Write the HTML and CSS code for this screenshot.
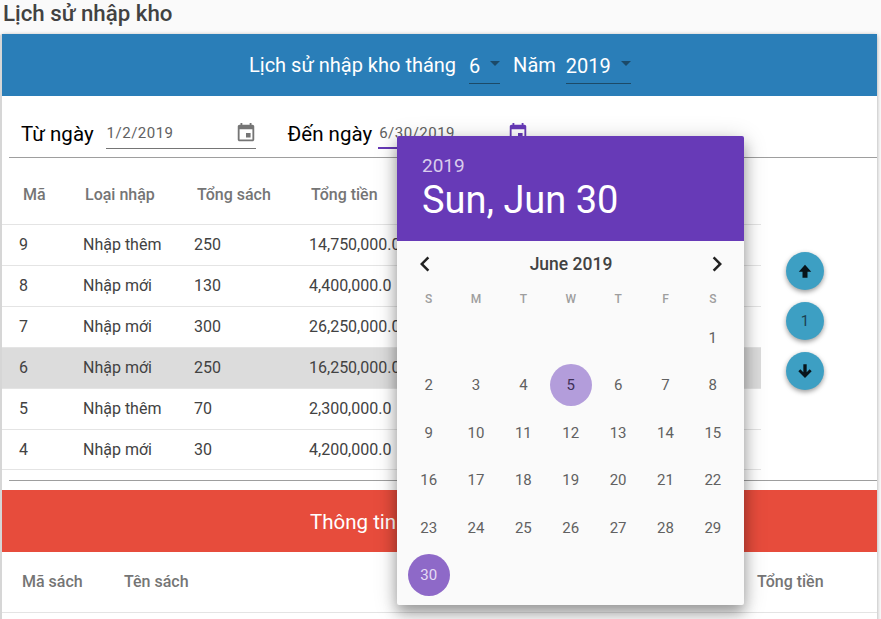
FILE: index.html
```html
<!DOCTYPE html>
<html lang="en">
<head>
    <meta charset="UTF-8">
    <meta name="viewport" content="width=device-width, initial-scale=1.0">
    <title>Lịch sử nhập kho</title>
    <link rel="stylesheet" href="styles.css">
</head>
<body>
    <h1 class="page-title">Lịch sử nhập kho</h1>

    <div class="card">
        <div class="banner banner-blue">
            <span>Lịch sử nhập kho tháng</span>
            <span class="select select-month">6<i class="caret"></i></span>
            <span>Năm</span>
            <span class="select select-year">2019<i class="caret"></i></span>
        </div>

        <div class="date-row">
            <span class="date-label">Từ ngày</span>
            <div class="date-input">
                <span>1/2/2019</span>
                <svg class="date-icon" viewBox="0 0 24 24"><path d="M17 12h-5v5h5v-5zM16 1v2H8V1H6v2H5c-1.11 0-1.99.9-1.99 2L3 19c0 1.1.89 2 2 2h14c1.1 0 2-.9 2-2V5c0-1.1-.9-2-2-2h-1V1h-2zm3 18H5V8h14v11z"/></svg>
            </div>
            <span class="date-label date-label-to">Đến ngày</span>
            <div class="date-input date-input-active">
                <span>6/30/2019</span>
                <svg class="date-icon" viewBox="0 0 24 24"><path d="M17 12h-5v5h5v-5zM16 1v2H8V1H6v2H5c-1.11 0-1.99.9-1.99 2L3 19c0 1.1.89 2 2 2h14c1.1 0 2-.9 2-2V5c0-1.1-.9-2-2-2h-1V1h-2zm3 18H5V8h14v11z"/></svg>
            </div>
        </div>
        <hr class="line">

        <div class="history">
            <table class="history-table">
                <thead>
                    <tr>
                        <th class="col-id">Mã</th>
                        <th class="col-type">Loại nhập</th>
                        <th class="col-books">Tổng sách</th>
                        <th>Tổng tiền</th>
                    </tr>
                </thead>
                <tbody>
                    <tr><td>9</td><td>Nhập thêm</td><td>250</td><td>14,750,000.0</td></tr>
                    <tr><td>8</td><td>Nhập mới</td><td>130</td><td>4,400,000.0</td></tr>
                    <tr><td>7</td><td>Nhập mới</td><td>300</td><td>26,250,000.0</td></tr>
                    <tr class="row-active"><td>6</td><td>Nhập mới</td><td>250</td><td>16,250,000.0</td></tr>
                    <tr><td>5</td><td>Nhập thêm</td><td>70</td><td>2,300,000.0</td></tr>
                    <tr class="row-last"><td>4</td><td>Nhập mới</td><td>30</td><td>4,200,000.0</td></tr>
                </tbody>
            </table>
            <div class="pager">
                <button class="fab"><svg viewBox="0 0 24 24"><path d="M12 4.500 19.500 13H15v7H9v-7H4.500z"/></svg></button>
                <button class="fab">1</button>
                <button class="fab"><svg viewBox="0 0 24 24"><path d="M10 4h4v9.500l3.600-3.600 2.400 2.400-8 8-8-8 2.400-2.400L10 13.500z"/></svg></button>
            </div>
        </div>
        <hr class="line line-bottom">

        <div class="banner banner-red">Thông tin</div>

        <div class="detail-head">
            <span class="col-code">Mã sách</span>
            <span class="col-name">Tên sách</span>
            <span>Tổng tiền</span>
        </div>
    </div>

    <div class="picker">
        <div class="picker-head">
            <div class="picker-year">2019</div>
            <div class="picker-date">Sun, Jun 30</div>
        </div>
        <div class="picker-body">
            <div class="picker-nav">
                <svg viewBox="0 0 24 24"><path d="M15.410 7.410 14 6l-6 6 6 6 1.410-1.410L10.830 12z"/></svg>
                <strong>June 2019</strong>
                <svg viewBox="0 0 24 24"><path d="M8.590 16.590 10 18l6-6-6-6-1.410 1.410L13.170 12z"/></svg>
            </div>
            <div class="week">
                <span>S</span><span>M</span><span>T</span><span>W</span><span>T</span><span>F</span><span>S</span>
            </div>
            <div class="days">
                <span></span><span></span><span></span><span></span><span></span><span></span><span>1</span>
                <span>2</span><span>3</span><span>4</span><span class="day-today">5</span><span>6</span><span>7</span><span>8</span>
                <span>9</span><span>10</span><span>11</span><span>12</span><span>13</span><span>14</span><span>15</span>
                <span>16</span><span>17</span><span>18</span><span>19</span><span>20</span><span>21</span><span>22</span>
                <span>23</span><span>24</span><span>25</span><span>26</span><span>27</span><span>28</span><span>29</span>
                <span class="day-selected">30</span>
            </div>
        </div>
    </div>
</body>
</html>
```

FILE: styles.css
```css
html, body {
    height: 619px;
    overflow: hidden;
}

body {
    font-family: "Roboto", sans-serif;
    background-color: #fafafa;
    color: #424242;
    margin: 0;
}

.page-title {
    font-size: 22.3px;
    font-weight: 500;
    line-height: 34px;
    height: 34px;
    margin: -4px 0 4px;
    padding-left: 3px;
    color: #424242;
    box-sizing: border-box;
}

.card {
    background-color: white;
    margin: 0 4px 0 2px;
    border-radius: 2px;
    box-shadow: -2px 0 0 #d6d6d6, 0 1px 4px rgba(0, 0, 0, 0.35);
    height: 640px;
}

.banner {
    display: flex;
    align-items: center;
    height: 62px;
    color: white;
    font-size: 20px;
}

.banner-blue {
    background-color: #2a7eb8;
    padding-left: 247px;
}

.banner-red {
    background-color: #e74c3c;
    padding: 2px 0 0 308px;
    box-sizing: border-box;
    font-size: 20.5px;
}

.select {
    position: relative;
    display: block;
    height: 37px;
    line-height: 41px;
    border-bottom: 1px solid #1c4a68;
}

.select-month {
    width: 31px;
    margin: 0 13px;
}

.select-year {
    width: 65px;
    margin-left: 10px;
}

.caret {
    position: absolute;
    right: 0;
    top: 15px;
    width: 0;
    height: 0;
    border-left: 5px solid transparent;
    border-right: 5px solid transparent;
    border-top: 5px solid #1c4a68;
}

.date-row {
    display: flex;
    align-items: center;
    box-sizing: border-box;
    height: 61px;
    padding: 14px 0 0 19px;
}

.date-label {
    font-size: 20.5px;
    color: black;
}

.date-label-to {
    margin-left: 32px;
}

.date-input {
    display: flex;
    align-items: center;
    justify-content: space-between;
    box-sizing: border-box;
    width: 150px;
    height: 30px;
    margin-left: 12px;
    padding: 0 1px;
    border-bottom: 1px solid #757575;
    font-size: 15px;
    letter-spacing: 0.5px;
    color: #616161;
}

.date-input-active {
    margin-left: 6px;
    border-bottom: 2px solid #673ab7;
}

.date-icon {
    width: 22px;
    height: 22px;
    margin-right: -2px;
    fill: #757575;
}

.date-input-active .date-icon {
    fill: #673ab7;
}

.line {
    height: 1px;
    margin: 0 0 0 7px;
    border: 0;
    background-color: #9e9e9e;
}

.line-bottom {
    margin-top: 10px;
    margin-bottom: 9px;
}

.history {
    display: flex;
    align-items: flex-start;
}

.history-table {
    width: 759px;
    border-collapse: collapse;
    table-layout: fixed;
    font-size: 16px;
}

.history-table th {
    height: 66px;
    padding: 8px 0 0 21px;
    box-sizing: border-box;
    text-align: left;
    font-weight: 500;
    font-size: 16px;
    color: #757575;
    border-bottom: 1px solid #e4e4e4;
}

.history-table .col-id {
    width: 81px;
}

.history-table .col-type {
    width: 111px;
    padding-left: 2px;
}

.history-table .col-books {
    width: 115px;
    padding-left: 3px;
}

.history-table th:last-child {
    padding-left: 2px;
}

.history-table td {
    height: 41px;
    padding: 0;
    box-sizing: border-box;
    border-bottom: 1px solid #e4e4e4;
}

.history-table .row-last td {
    height: 40px;
}

.history-table td:first-child {
    padding-left: 17px;
}

.row-active {
    background-color: #dcdcdc;
}

.pager {
    display: flex;
    flex-direction: column;
    gap: 12px;
    margin: 94px 0 0 25px;
}

.fab {
    display: flex;
    align-items: center;
    justify-content: center;
    width: 38px;
    height: 38px;
    padding: 0;
    border: 0;
    border-radius: 50%;
    background-color: #3d9fc3;
    color: #1c3f50;
    font-family: "Roboto", sans-serif;
    font-size: 15px;
    box-shadow: 0 2px 5px rgba(0, 0, 0, 0.4);
}

.fab svg {
    width: 20px;
    height: 20px;
    fill: #08141a;
}

.detail-head {
    display: flex;
    align-items: center;
    height: 60px;
    padding-left: 20px;
    border-bottom: 1px solid #e4e4e4;
    font-size: 16px;
    font-weight: 500;
    color: #757575;
}

.col-code {
    width: 102px;
}

.col-name {
    width: 633px;
}

/* date picker popup sits over the page */
.picker {
    position: absolute;
    left: 397px;
    top: 136px;
    width: 347px;
    height: 469px;
    border-radius: 2px;
    background-color: #fafafa;
    box-shadow: 0 8px 14px rgba(0, 0, 0, 0.3), 0 4px 24px rgba(0, 0, 0, 0.2);
}

.picker-head {
    box-sizing: border-box;
    height: 105px;
    padding: 19px 0 0 25px;
    background-color: #673ab7;
    color: white;
    border-radius: 2px 2px 0 0;
}

.picker-year {
    font-size: 19px;
    line-height: 22px;
    color: rgba(255, 255, 255, 0.75);
}

.picker-date {
    font-size: 38px;
    line-height: 46px;
}

.picker-body {
    padding: 0 7.5px 0 8px;
}

.picker-nav {
    display: flex;
    align-items: center;
    justify-content: space-between;
    height: 44px;
    margin: 1px 4.5px 0 5px;
    font-size: 17.5px;
}

.picker-nav strong {
    font-weight: 500;
    color: #424242;
}

.picker-nav svg {
    width: 30px;
    height: 30px;
    fill: #212121;
}

.week {
    display: grid;
    grid-template-columns: repeat(7, 1fr);
    height: 24px;
    line-height: 24px;
    margin-top: 1px;
    text-align: center;
    font-size: 12px;
    font-weight: 500;
    color: #9e9e9e;
}

.days {
    display: grid;
    grid-template-columns: repeat(7, 1fr);
    grid-auto-rows: 47.5px;
    margin-top: 3px;
    font-size: 15px;
    color: #616161;
}

.days span {
    display: flex;
    align-items: center;
    justify-content: center;
}

.day-today {
    justify-self: center;
    align-self: center;
    width: 42px;
    height: 42px;
    border-radius: 50%;
    background-color: #b39ddb;
    color: #3f3057;
}

.day-selected {
    justify-self: center;
    align-self: center;
    width: 42px;
    height: 42px;
    border-radius: 50%;
    background-color: #8e69c8;
    color: #e6dcf5;
}
```
